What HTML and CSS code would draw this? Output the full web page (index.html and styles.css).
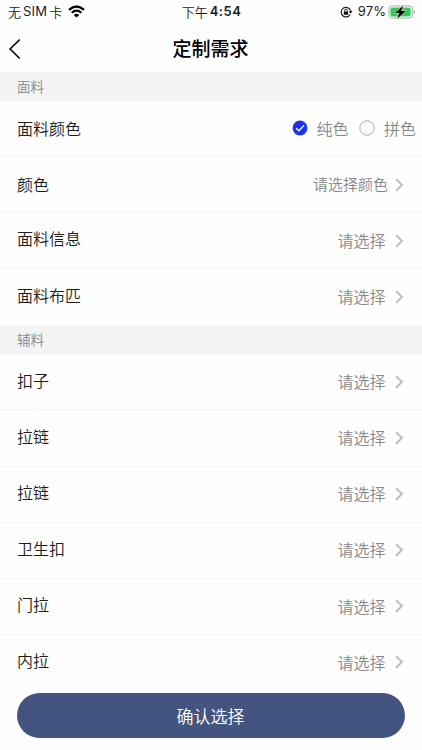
FILE: index.html
```html
<!DOCTYPE html>
<html lang="zh-CN">
  <head>
    <meta charset="UTF-8" />
    <meta name="viewport" content="width=device-width, initial-scale=1.0" />
    <title>定制需求</title>
    <link rel="stylesheet" href="styles.css">
  </head>
  <body>
    <svg width="0" height="0" class="defs">
      <symbol id="arrow" viewBox="0 0 9 14">
        <path d="M1 1.2 L7 7 L1 12.8" fill="none" stroke="#bdbdbd" stroke-width="1.9" />
      </symbol>
    </svg>
    <div class="page">
      <header class="status-bar">
        <div class="carrier">
          <span>无</span><span class="sim">SIM</span><span>卡</span>
          <svg class="wifi" width="17" height="13" viewBox="0 0 17 13">
            <g fill="none" stroke="#000" stroke-width="2.2">
              <path d="M1 4.9 Q8.5 -1.9 16 4.9" />
              <path d="M3.7 7.8 Q8.5 3.5 13.3 7.8" />
            </g>
            <path d="M5.8 9.9 Q8.5 7.5 11.2 9.9 L8.5 12.6 Z" />
          </svg>
        </div>
        <div class="time"><span>下午</span><b>4:54</b></div>
        <div class="power">
          <svg width="13" height="12" viewBox="0 0 13 12">
            <path d="M10.1 8.6 A4.8 4.8 0 1 1 10.6 4.8" fill="none" stroke="#111" stroke-width="1.1" />
            <path d="M8.9 5.1 H12.5 L10.8 7.7 Z" fill="#111" />
            <rect x="3.8" y="5.4" width="4.4" height="3.3" rx=".5" fill="#111" />
            <path d="M4.7 5.6 V4.4 a1.3 1.3 0 0 1 2.6 0 V5.6" fill="none" stroke="#111" stroke-width=".9" />
          </svg>
          <span class="percent">97%</span>
          <svg class="battery" width="28" height="14" viewBox="0 0 28 14">
            <rect x=".9" y=".9" width="23.8" height="12.2" rx="3.6" fill="#fff" stroke="#a9a9a9" />
            <rect x="2.4" y="2.4" width="20.3" height="9.2" rx="2.2" fill="#36c759" />
            <path d="M25.7 5 q1.5 .4 1.5 2 t-1.5 2 Z" fill="#a9a9a9" />
            <path d="M15.2 .4 L6.8 7.9 H11.3 L9 13.7 L18 6.1 H13.2 Z" fill="#000" stroke="#fff" stroke-width=".9" paint-order="stroke" />
          </svg>
        </div>
      </header>

      <nav class="nav-bar">
        <svg class="back" width="13" height="22" viewBox="0 0 13 22">
          <path d="M11.8 1.5 L2.1 11 L11.8 20.5" fill="none" stroke="#000" stroke-width="1.6" />
        </svg>
        <h1>定制需求</h1>
      </nav>

      <h2 class="section-title">面料</h2>
      <div class="row radio-row">
        <span class="label">面料颜色</span>
        <div class="radios">
          <div class="radio">
            <svg width="16" height="16" viewBox="0 0 16 16">
              <circle cx="8" cy="8" r="7.4" fill="#1b33f0" />
              <path d="M4.1 8.2 L6.9 10.8 L12 5.4" fill="none" stroke="#fff" stroke-width="1.3" />
            </svg>
            <span>纯色</span>
          </div>
          <div class="radio">
            <svg width="16" height="16" viewBox="0 0 16 16">
              <circle cx="8" cy="8" r="7.2" fill="#fff" stroke="#999" stroke-width=".8" />
            </svg>
            <span>拼色</span>
          </div>
        </div>
      </div>
      <div class="row color-row">
        <span class="label">颜色</span>
        <span class="value">请选择颜色</span>
        <svg class="arrow"><use href="#arrow" /></svg>
      </div>
      <div class="row">
        <span class="label">面料信息</span>
        <span class="value">请选择</span>
        <svg class="arrow"><use href="#arrow" /></svg>
      </div>
      <div class="row last">
        <span class="label">面料布匹</span>
        <span class="value">请选择</span>
        <svg class="arrow"><use href="#arrow" /></svg>
      </div>

      <h2 class="section-title">辅料</h2>
      <div class="row">
        <span class="label">扣子</span>
        <span class="value">请选择</span>
        <svg class="arrow"><use href="#arrow" /></svg>
      </div>
      <div class="row">
        <span class="label">拉链</span>
        <span class="value">请选择</span>
        <svg class="arrow"><use href="#arrow" /></svg>
      </div>
      <div class="row">
        <span class="label">拉链</span>
        <span class="value">请选择</span>
        <svg class="arrow"><use href="#arrow" /></svg>
      </div>
      <div class="row">
        <span class="label">卫生扣</span>
        <span class="value">请选择</span>
        <svg class="arrow"><use href="#arrow" /></svg>
      </div>
      <div class="row">
        <span class="label">门拉</span>
        <span class="value">请选择</span>
        <svg class="arrow"><use href="#arrow" /></svg>
      </div>
      <div class="row last">
        <span class="label">内拉</span>
        <span class="value">请选择</span>
        <svg class="arrow"><use href="#arrow" /></svg>
      </div>

      <footer class="footer">
        <button class="confirm">确认选择</button>
      </footer>
    </div>
  </body>
</html>
```
FILE: styles.css
```css
* {
  box-sizing: border-box;
}

body {
  margin: 0;
  background: #fefefe;
  color: #1c1c1c;
  font-family: "Noto Sans CJK SC", sans-serif;
  font-size: 16px;
  font-weight: 350;
}

svg {
  display: block;
  flex: none;
}

.defs {
  display: none;
}

.page {
  display: flex;
  flex-direction: column;
  height: 750px;
  overflow: hidden;
}

.status-bar {
  display: grid;
  grid-template-columns: 1fr auto 1fr;
  align-items: center;
  flex: none;
  height: 23px;
  padding: 0 6px 0 8px;
  font-size: 13px;
  line-height: 23px;
}

.carrier,
.time,
.power {
  display: flex;
  align-items: center;
}

.sim,
.percent {
  font-family: Inter, sans-serif;
  font-weight: 400;
}

.sim {
  margin: 0 2px 0 2px;
  letter-spacing: 0.2px;
}

.wifi {
  margin-left: 6px;
}

.time {
  margin-right: 1px;
}

.time b {
  margin-left: 2px;
  font-family: Inter, sans-serif;
  font-weight: 600;
  letter-spacing: 0.5px;
}

.power {
  justify-content: flex-end;
}

.percent {
  margin: 0 2px 0 5px;
  letter-spacing: 0.1px;
}

.nav-bar {
  display: grid;
  grid-template-columns: 40px 1fr 41px;
  align-items: center;
  flex: none;
  height: 49px;
}

.back {
  margin: 2px 0 0 8px;
}

h1 {
  margin: 0;
  color: #000;
  font-size: 19px;
  font-weight: 500;
  line-height: 28px;
  text-align: center;
}

.section-title {
  flex: none;
  height: 29px;
  margin: 0;
  padding-left: 17px;
  background: #f4f4f4;
  color: #888;
  font-size: 13.5px;
  font-weight: inherit;
  line-height: 28px;
}

.row {
  display: flex;
  align-items: center;
  flex: none;
  height: 56.1px;
  padding: 0 18px 0 17px;
  border-bottom: 1px solid #f3f3f3;
  line-height: 24px;
}

.row.last {
  border-bottom-color: transparent;
}

.label {
  margin-bottom: 4.5px;
}

.value {
  margin: 0 0 1.5px auto;
  color: #888;
}

.arrow {
  width: 9px;
  height: 14px;
  margin-left: 9.5px;
}

.radio-row {
  padding-right: 7px;
}

.radio-row .label,
.color-row .label {
  margin-bottom: 2px;
}

.radios {
  display: flex;
  gap: 11px;
  margin: 0 -1px 0 auto;
  color: #888;
}

.radio {
  display: flex;
  align-items: center;
  gap: 8.5px;
}

.radio span {
  margin-bottom: 1px;
}

.radio svg {
  margin-bottom: 1px;
}

.color-row .value {
  font-size: 15px;
}

.color-row .arrow {
  margin-left: 7px;
}

.footer {
  flex: none;
  padding: 2.4px 17px 0;
}

.confirm {
  display: block;
  width: 100%;
  height: 45px;
  padding: 0 1px 1px 0;
  border: none;
  border-radius: 23px;
  background: #42547f;
  color: #fff;
  font-family: inherit;
  font-size: 17px;
  font-weight: inherit;
}
```
